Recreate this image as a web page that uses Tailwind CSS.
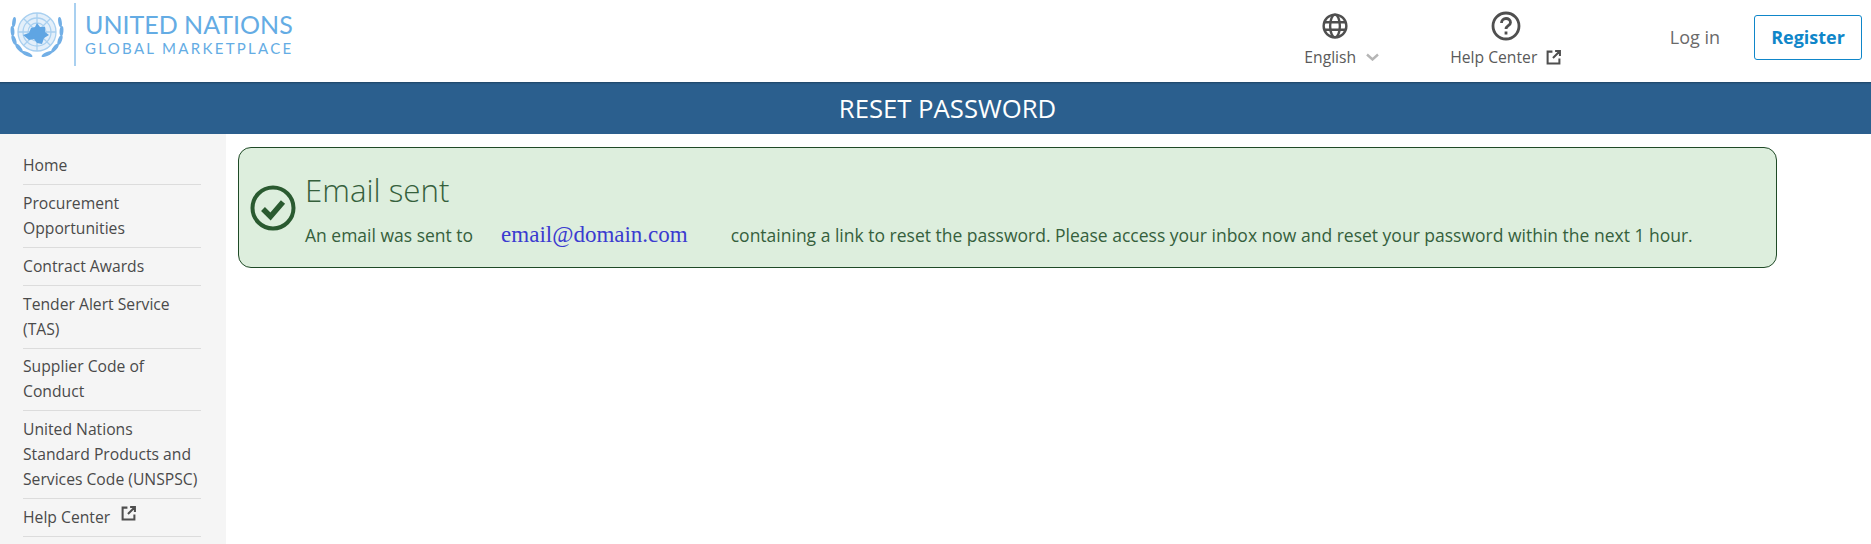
<!DOCTYPE html>
<html lang="en">
  <head>
    <meta charset="UTF-8" />
    <script src="https://cdn.jsdelivr.net/npm/@tailwindcss/browser@4"></script>
    <title>Reset password</title>
  </head>
  <body class="bg-white font-['Open_Sans',sans-serif] overflow-hidden">
    <header class="h-[82px] flex items-start">
      <div class="flex items-center pl-[9px] pt-[3px]">
        <svg class="w-[56px] h-[50px] mt-[1px]" viewBox="0 0 56 50" fill="none">
          <circle cx="28" cy="22" r="19" fill="#e3effa" />
          <g stroke="#a9d0f0" stroke-width="1.300">
            <circle cx="28" cy="22" r="19" />
            <circle cx="28" cy="22" r="14" />
            <circle cx="28" cy="22" r="9" />
            <path d="M9 22h38M28 3v38M14.500 8.500l27 27M41.500 8.500l-27 27" />
          </g>
          <path d="M14 25l6-2 2-5 4-1 2-4 3 4 5 0 0 5 4 3-5 3-2 6-5-1-3-4-5 1z" fill="#5fa5e3" />
          <g fill="#72afe6">
            <ellipse cx="5" cy="12" rx="1.800" ry="5" transform="rotate(8 5 12)" />
            <ellipse cx="3.500" cy="21" rx="1.900" ry="5" transform="rotate(-4 3.500 21)" />
            <ellipse cx="5" cy="30" rx="2" ry="5" transform="rotate(-20 5 30)" />
            <ellipse cx="10" cy="38" rx="2" ry="5.500" transform="rotate(-40 10 38)" />
            <ellipse cx="18" cy="44" rx="2" ry="6" transform="rotate(-65 18 44)" />
            <ellipse cx="51" cy="12" rx="1.800" ry="5" transform="rotate(-8 51 12)" />
            <ellipse cx="52.500" cy="21" rx="1.900" ry="5" transform="rotate(4 52.500 21)" />
            <ellipse cx="51" cy="30" rx="2" ry="5" transform="rotate(20 51 30)" />
            <ellipse cx="46" cy="38" rx="2" ry="5.500" transform="rotate(40 46 38)" />
            <ellipse cx="38" cy="44" rx="2" ry="6" transform="rotate(65 38 44)" />
          </g>
        </svg>
        <div class="w-[2px] h-[63px] bg-[#a9d0f0] ml-[9px] mr-[9px]"></div>
        <div class="font-['Lato',sans-serif] text-[#64ace4] leading-none">
          <div class="text-[25px] leading-[27px]">UNITED NATIONS</div>
          <div class="text-[15px] tracking-[2.300px] leading-[20px]">GLOBAL MARKETPLACE</div>
        </div>
      </div>
      <nav class="ml-auto flex items-start text-[#5a5a5a]">
        <a class="w-[130px] mt-[11px] flex flex-col items-center">
          <span class="h-[30px] mb-[5px] flex items-center">
            <svg class="w-[26px] h-[26px]" viewBox="0 0 24 24" fill="none" stroke="#4f4f4f" stroke-width="2.200">
              <circle cx="12" cy="12" r="10.500" />
              <ellipse cx="12" cy="12" rx="4.500" ry="10.500" />
              <path d="M2.500 8.500h19M2.500 15.500h19" />
            </svg>
          </span>
          <span class="flex items-center text-[15.700px] leading-[22px]">
            English
            <svg class="w-[13px] h-[8px] ml-[10px] mr-[-14px]" viewBox="0 0 13 8" fill="none" stroke="#b5b5b5" stroke-width="2.400"><path d="M1 1.500l5.500 5 5.500-5" /></svg>
          </span>
        </a>
        <a class="w-[130px] ml-[41px] mt-[11px] flex flex-col items-center">
          <span class="h-[30px] mb-[5px] flex items-center">
            <svg class="w-[30px] h-[30px]" viewBox="0 0 30 30" fill="none" stroke="#4f4f4f" stroke-width="2.800">
              <circle cx="15" cy="15" r="13" />
              <path d="M10.500 12c0-2.800 2-4.500 4.500-4.500s4.500 1.700 4.500 4c0 3.200-4.500 3.200-4.500 6.500" />
              <path d="M15 20.500v3" />
            </svg>
          </span>
          <span class="flex items-center text-[15.700px] leading-[22px]">
            Help Center
            <svg class="w-[15px] h-[15px] ml-[9px]" viewBox="0 0 14 14" fill="none" stroke="#4f4f4f" stroke-width="1.900"><path d="M6 1.500H1.500v11h11V8M6.500 7.500L13 1M8.500 1h4.500v4.500" /></svg>
          </span>
        </a>
        <a class="ml-[99px] mt-[25px] text-[18px] leading-[24px] text-[#6a6a6a]">Log in</a>
        <a class="ml-[34px] mr-[9px] mt-[15px] w-[108px] h-[45px] flex items-center justify-center border border-[#0f86c9] rounded-[3px] text-[#0f86c9] text-[18px] font-bold">Register</a>
      </nav>
    </header>

    <div class="h-[52px] pl-[24px] pt-[2px] bg-[#2b5f8e] flex items-center justify-center text-white text-[25.700px] shadow-[inset_0_3px_2px_-2px_rgba(0,0,0,0.3)]">RESET PASSWORD</div>

    <div class="flex items-start">
      <aside class="w-[226px] h-[410px] shrink-0 bg-[#f5f5f5] px-[23px] pt-[19px] text-[15.700px] leading-[25px] text-[#4a4a4a]">
        <ul class="w-[178px]">
          <li class="pb-[6px] border-b border-[#dcdcdc]">Home</li>
          <li class="py-[6px] border-b border-[#dcdcdc]">Procurement Opportunities</li>
          <li class="py-[6px] border-b border-[#dcdcdc]">Contract Awards</li>
          <li class="py-[6px] border-b border-[#dcdcdc]">Tender Alert Service (TAS)</li>
          <li class="pt-[5px] pb-[6px] border-b border-[#dcdcdc]">Supplier Code of Conduct</li>
          <li class="py-[6px] border-b border-[#dcdcdc]">United Nations Standard Products and Services Code (UNSPSC)</li>
          <li class="py-[6px] border-b border-[#dcdcdc] flex items-start">
            Help Center
            <svg class="w-[15px] h-[15px] ml-[11px] mt-[1px]" viewBox="0 0 14 14" fill="none" stroke="#4f4f4f" stroke-width="1.900"><path d="M6 1.500H1.500v11h11V8M6.500 7.500L13 1M8.500 1h4.500v4.500" /></svg>
          </li>
        </ul>
      </aside>

      <main class="flex-1 pt-[13px] pl-[12px]">
        <div class="w-[1539px] h-[121px] flex items-center bg-[#ddeedd] border border-[#1f4a26] rounded-[13px] pl-[11px] text-[#35603c]">
          <svg class="w-[46px] h-[46px] shrink-0" viewBox="0 0 46 46" fill="none">
            <circle cx="23" cy="23" r="20.500" stroke="#2a5a30" stroke-width="4" />
            <path d="M13 24l7.500 7.500L33 17" stroke="#2a5a30" stroke-width="5.500" />
          </svg>
          <div class="ml-[9px] pt-[3px]">
            <h2 class="text-[31.300px] font-light leading-[40px]">Email sent</h2>
            <p class="text-[17.500px] leading-[26px] mt-[12px] flex items-center whitespace-pre">
              <span>An email was sent to</span>
              <span class="ml-[28px] mr-[43px] font-['Liberation_Serif',serif] text-[23px] text-[#3b3bd0]">email@domain.com</span>
              <span>containing a link to reset the password. Please access your inbox now and reset your password within the next 1 hour.</span>
            </p>
          </div>
        </div>
      </main>
    </div>
  </body>
</html>
